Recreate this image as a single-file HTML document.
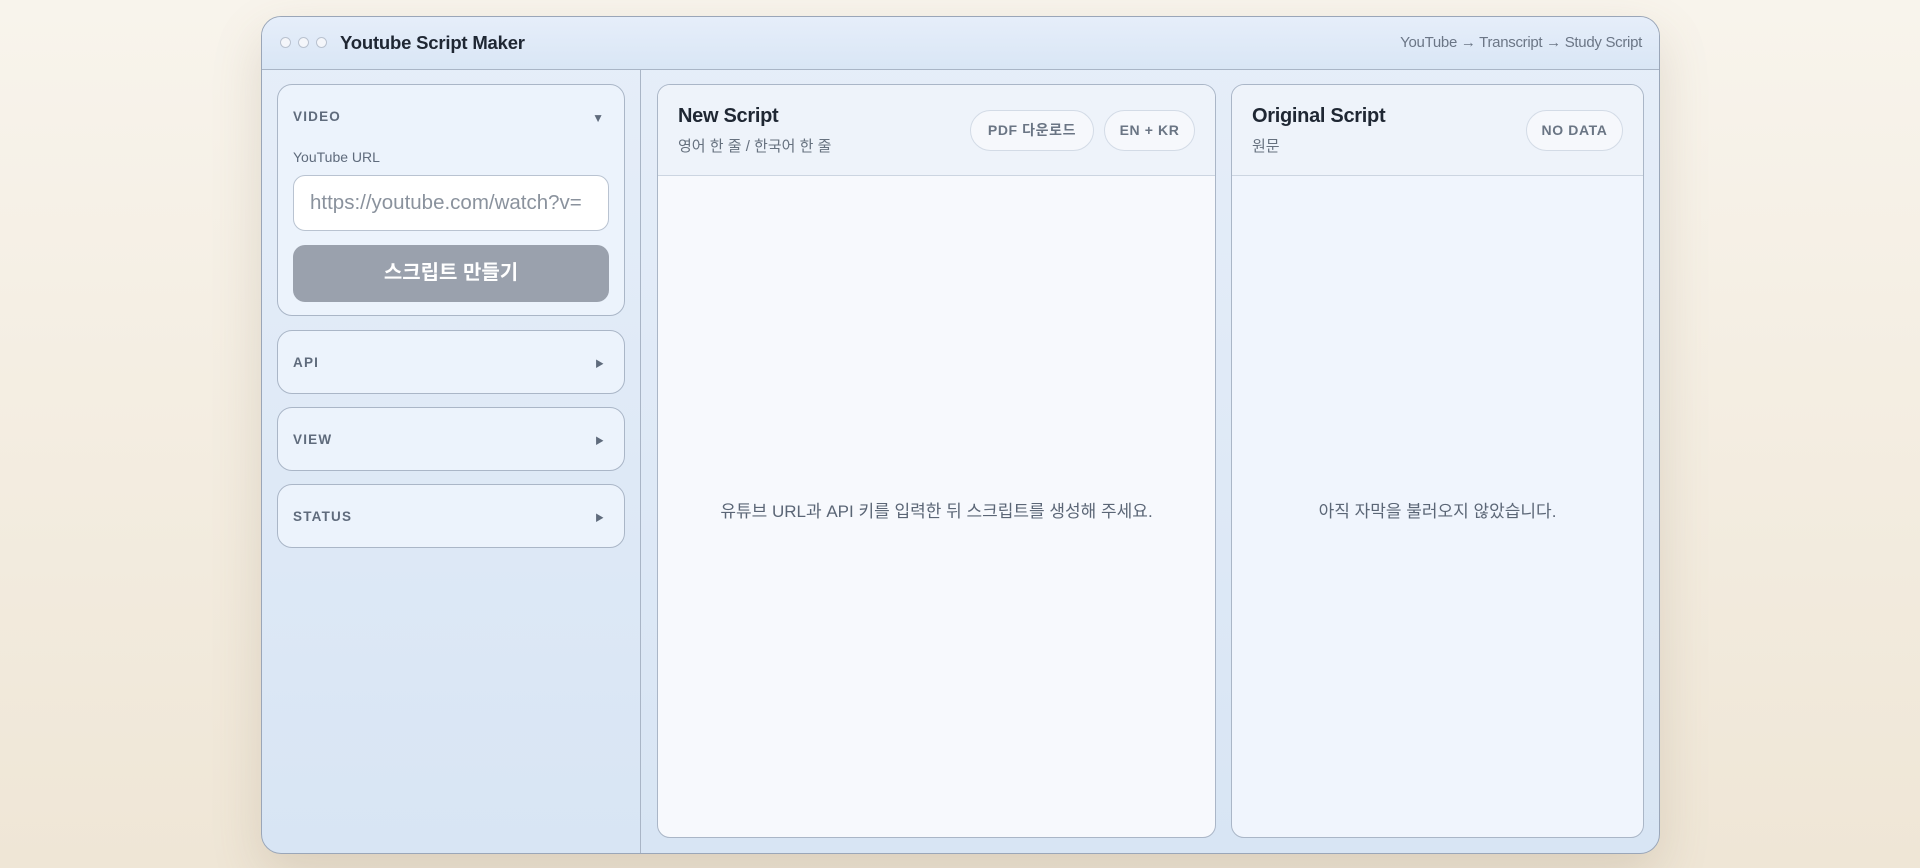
<!DOCTYPE html>
<html><head><meta charset="utf-8"><style>
*{box-sizing:border-box;margin:0;padding:0}
body{width:1920px;height:868px;overflow:hidden;background:linear-gradient(180deg,#f8f4ec 0%,#efe6d6 100%);font-family:"Liberation Sans","Noto Sans CJK KR",sans-serif;position:relative}
.win{position:absolute;left:261px;top:16px;width:1399px;height:838px;border:1px solid #9aa6b8;border-radius:20px;background:linear-gradient(180deg,#e6eef9,#d8e5f4);box-shadow:0 20px 50px rgba(120,100,70,.18);overflow:hidden}
.bar{position:absolute;left:0;top:0;right:0;height:53px;border-bottom:1px solid #a9b5c6;background:linear-gradient(180deg,#e6eefa,#d9e6f5)}
.dot{position:absolute;top:20px;width:11px;height:11px;border-radius:50%;background:#f4f6fa;border:1px solid #b9c2cf}
.title{position:absolute;left:78px;top:15px;font-size:18.5px;font-weight:bold;color:#1f2733;letter-spacing:-.2px}
.crumb{position:absolute;right:17px;top:17px;font-size:15px;color:#6b7686;letter-spacing:-.3px}
.side{position:absolute;left:0;top:53px;width:379px;bottom:0;border-right:1px solid #a9b5c6}
.card{position:absolute;left:15px;width:348px;border:1px solid #aab6c7;border-radius:15px;background:#ecf3fc}
.lbl{position:absolute;left:15px;font-size:13.5px;font-weight:bold;letter-spacing:1.2px;color:#5f6b7c}
.arr{position:absolute;right:20px;font-size:9px;color:#5f6b7c}
.panel{position:absolute;top:67px;bottom:15px;border:1px solid #aab6c7;border-radius:13px;background:#f7f9fd;overflow:hidden}
.ph{position:absolute;left:0;right:0;top:0;height:91px;border-bottom:1px solid #ccd5e1;background:#eef3fa}
.pt{position:absolute;left:20px;top:20px;font-size:20px;font-weight:bold;color:#1f2733;letter-spacing:-.3px}
.ps{position:absolute;left:20px;top:50px;font-size:15px;color:#66717f}
.pill{position:absolute;top:25px;height:41px;border:1px solid #d3dbe6;border-radius:21px;background:#f6f8fc;font-size:14px;font-weight:bold;color:#6a7584;letter-spacing:.6px;text-align:center;line-height:39px}
.empty{position:absolute;left:0;right:0;top:412px;text-align:center;font-size:17px;color:#5b6676}
</style></head><body>
<div class="win">
 <div class="bar">
  <div class="dot" style="left:18px"></div><div class="dot" style="left:36px"></div><div class="dot" style="left:54px"></div>
  <div class="title">Youtube Script Maker</div>
  <div class="crumb">YouTube → Transcript → Study Script</div>
 </div>
 <div class="side">
  <div class="card" style="top:14px;height:232px">
   <div class="lbl" style="top:24px">VIDEO</div><div class="arr" style="top:26px;font-size:12px">▼</div>
   <div style="position:absolute;left:15px;top:64px;font-size:14px;color:#5f6b7c">YouTube URL</div>
   <div style="position:absolute;left:15px;top:90px;width:316px;height:56px;background:#fff;border:1px solid #b9c3d1;border-radius:12px;font-size:20.5px;color:#8a929d;line-height:54px;padding-left:16px;white-space:nowrap;overflow:hidden">https://youtube.com/watch?v=</div>
   <div style="position:absolute;left:15px;top:160px;width:316px;height:57px;background:#9aa1ad;border-radius:12px;color:#fff;font-size:20px;font-weight:bold;text-align:center;line-height:57px">스크립트 만들기</div>
  </div>
  <div class="card" style="top:260px;height:64px"><div class="lbl" style="top:24px">API</div><div class="arr" style="top:26px">▶</div></div>
  <div class="card" style="top:337px;height:64px"><div class="lbl" style="top:24px">VIEW</div><div class="arr" style="top:26px">▶</div></div>
  <div class="card" style="top:414px;height:64px"><div class="lbl" style="top:24px">STATUS</div><div class="arr" style="top:26px">▶</div></div>
 </div>
 <div class="panel" style="left:395px;width:559px">
  <div class="ph"><div class="pt">New Script</div><div class="ps">영어 한 줄 / 한국어 한 줄</div>
   <div class="pill" style="left:312px;width:124px">PDF 다운로드</div>
   <div class="pill" style="left:446px;width:91px">EN + KR</div></div>
  <div class="empty">유튜브 URL과 API 키를 입력한 뒤 스크립트를 생성해 주세요.</div>
 </div>
 <div class="panel" style="left:969px;width:413px;background:#f0f5fd">
  <div class="ph"><div class="pt">Original Script</div><div class="ps">원문</div>
   <div class="pill" style="left:294px;width:97px">NO DATA</div></div>
  <div class="empty">아직 자막을 불러오지 않았습니다.</div>
 </div>
</div>
</body></html>
